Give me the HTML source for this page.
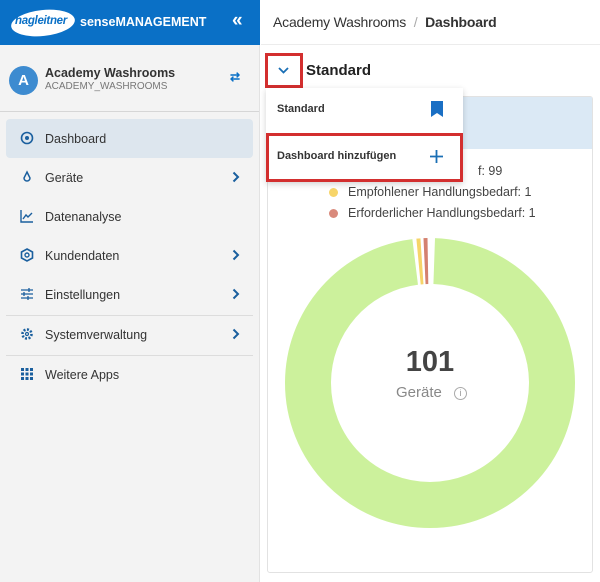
<!DOCTYPE html>
<html><head><meta charset="utf-8"><style>
*{box-sizing:border-box;margin:0;padding:0}
body{width:600px;height:582px;overflow:hidden;font-family:"Liberation Sans",Arial,sans-serif;background:#fff;position:relative}
.abs{position:absolute}
#side{left:0;top:0;width:260px;height:582px;background:#f3f3f3;border-right:1px solid #e2e2e2}
#hdr{left:0;top:0;width:260px;height:45px;background:#0a70c6}
.nav{position:absolute;left:6px;width:247px;height:39px;font-size:12.5px;color:#333;display:flex;align-items:center}
.nav .ic{position:absolute;left:14px;top:12px;width:14px;height:14px}
.nav .t{position:absolute;left:39px}
.nav .ch{position:absolute;left:226px;top:13px}
.sep{position:absolute;left:6px;width:247px;height:1px;background:#dcdcdc}
</style></head><body>
<div id="side" class="abs"></div>
<div id="hdr" class="abs">
 <div class="abs" style="left:11px;top:10px;width:64px;height:26px;background:#fff;border-radius:50%;transform:rotate(-6deg)"></div>
 <div class="abs" style="left:15px;top:15px;font-size:11.5px;font-style:italic;font-weight:bold;color:#0a70c6;letter-spacing:-0.3px">hagleitner</div>
 <div class="abs" style="left:80px;top:15px;font-size:12.5px;font-weight:bold;color:#fff">senseMANAGEMENT</div>
 <div class="abs" style="left:232px;top:10px;font-size:19px;font-weight:bold;color:#fff">«</div>
</div>
<div class="abs" style="left:9px;top:66px;width:29px;height:29px;border-radius:50%;background:#3d8bd0;color:#fff;font-weight:bold;font-size:15px;text-align:center;line-height:29px">A</div>
<div class="abs" style="left:45px;top:66px;font-size:12.5px;font-weight:bold;color:#333">Academy Washrooms</div>
<div class="abs" style="left:45px;top:81px;font-size:10px;color:#777">ACADEMY_WASHROOMS</div>
<div class="abs" style="left:230px;top:70px;font-size:12px;color:#0a70c6;font-weight:bold">⇄</div>
<div class="abs" style="left:0;top:111px;width:259px;height:1px;background:#d6d6d6"></div>
<div class="nav" style="top:119px;background:#dde6ee;border-radius:4px"><svg class="ic" viewBox="0 0 14 14"><circle cx="7" cy="7" r="5.5" fill="none" stroke="#1a5f9e" stroke-width="1.6"/><circle cx="7" cy="7" r="2" fill="#1a5f9e"/></svg><span class="t">Dashboard</span></div>
<div class="nav" style="top:158px"><svg class="ic" viewBox="0 0 14 14"><path d="M7 2 L10 8 A3 3 0 1 1 4 8 Z" fill="none" stroke="#1a5f9e" stroke-width="1.5"/></svg><span class="t">Geräte</span><svg class="ch" width="8" height="12" viewBox="0 0 8 12"><path d="M1.5 1.5 L6 6 L1.5 10.5" fill="none" stroke="#1a5f9e" stroke-width="2"/></svg></div>
<div class="nav" style="top:197px"><svg class="ic" viewBox="0 0 14 14"><path d="M1 1V13H13M3 10L6 6L8 8L12 4" fill="none" stroke="#1a5f9e" stroke-width="1.4"/></svg><span class="t">Datenanalyse</span></div>
<div class="nav" style="top:236px"><svg class="ic" viewBox="0 0 14 14"><path d="M7 1L12.5 4V10L7 13L1.5 10V4Z" fill="none" stroke="#1a5f9e" stroke-width="1.6"/><circle cx="7" cy="7" r="2" fill="none" stroke="#1a5f9e" stroke-width="1.4"/></svg><span class="t">Kundendaten</span><svg class="ch" width="8" height="12" viewBox="0 0 8 12"><path d="M1.5 1.5 L6 6 L1.5 10.5" fill="none" stroke="#1a5f9e" stroke-width="2"/></svg></div>
<div class="nav" style="top:275px"><svg class="ic" viewBox="0 0 14 14"><path d="M1 3H13M1 7H13M1 11H13M9 1V5M4 5V9M8 9V13" fill="none" stroke="#1a5f9e" stroke-width="1.3"/></svg><span class="t">Einstellungen</span><svg class="ch" width="8" height="12" viewBox="0 0 8 12"><path d="M1.5 1.5 L6 6 L1.5 10.5" fill="none" stroke="#1a5f9e" stroke-width="2"/></svg></div>
<div class="sep" style="top:315px"></div>
<div class="nav" style="top:315px"><svg class="ic" viewBox="0 0 14 14"><circle cx="7" cy="7" r="4.5" fill="none" stroke="#1a5f9e" stroke-width="2.6" stroke-dasharray="2 1.5"/><circle cx="7" cy="7" r="1.5" fill="none" stroke="#1a5f9e" stroke-width="1.2"/></svg><span class="t">Systemverwaltung</span><svg class="ch" width="8" height="12" viewBox="0 0 8 12"><path d="M1.5 1.5 L6 6 L1.5 10.5" fill="none" stroke="#1a5f9e" stroke-width="2"/></svg></div>
<div class="sep" style="top:355px"></div>
<div class="nav" style="top:355px"><svg class="ic" viewBox="0 0 14 14" fill="#1a5f9e"><rect x="1" y="1" width="3" height="3"/><rect x="5.5" y="1" width="3" height="3"/><rect x="10" y="1" width="3" height="3"/><rect x="1" y="5.5" width="3" height="3"/><rect x="5.5" y="5.5" width="3" height="3"/><rect x="10" y="5.5" width="3" height="3"/><rect x="1" y="10" width="3" height="3"/><rect x="5.5" y="10" width="3" height="3"/><rect x="10" y="10" width="3" height="3"/></svg><span class="t">Weitere Apps</span></div>

<div class="abs" style="left:261px;top:44px;width:339px;height:1px;background:#ececec"></div>
<div class="abs" style="left:273px;top:14px;font-size:14px;color:#333;letter-spacing:-0.2px">Academy Washrooms <span style="color:#aaa;margin:0 4px">/</span> <b>Dashboard</b></div>

<div class="abs" style="left:267px;top:96px;width:326px;height:477px;border:1px solid #e2e2e2;border-radius:3px;background:#fff"></div>
<div class="abs" style="left:268px;top:97px;width:324px;height:52px;background:#dbe9f5"></div>
<div class="abs" style="left:478px;top:164px;font-size:12.5px;color:#444">f: 99</div>
<div class="abs" style="left:329px;top:188px;width:9px;height:9px;border-radius:50%;background:#f7d56a"></div>
<div class="abs" style="left:348px;top:185px;font-size:12.5px;color:#444">Empfohlener Handlungsbedarf: 1</div>
<div class="abs" style="left:329px;top:209px;width:9px;height:9px;border-radius:50%;background:#d98a7c"></div>
<div class="abs" style="left:348px;top:206px;font-size:12.5px;color:#444">Erforderlicher Handlungsbedarf: 1</div>
<svg class="abs" style="left:285px;top:238px" width="290" height="290" viewBox="0 0 290 290">
 <g transform="rotate(-90 145 145)">
 <circle cx="145" cy="145" r="122" fill="none" stroke="#ccf19c" stroke-width="46" pathLength="360" stroke-dasharray="351 9" stroke-dashoffset="-2"/>
 <circle cx="145" cy="145" r="122" fill="none" stroke="#f6d469" stroke-width="46" pathLength="360" stroke-dasharray="1.6 358.4" stroke-dashoffset="-354.6"/>
 <circle cx="145" cy="145" r="122" fill="none" stroke="#d4816f" stroke-width="46" pathLength="360" stroke-dasharray="1.6 358.4" stroke-dashoffset="-357.4"/>
 </g>
</svg>
<div class="abs" style="left:380px;top:346px;width:100px;text-align:center;font-size:29px;font-weight:bold;color:#444">101</div>
<div class="abs" style="left:396px;top:384px;font-size:15px;color:#888">Geräte</div>
<div class="abs" style="left:454px;top:387px;width:13px;height:13px;border:1px solid #aaa;border-radius:50%;font-size:9px;color:#999;text-align:center;line-height:11px">i</div>

<div class="abs" style="left:265px;top:53px;width:38px;height:35px;border:3px solid #d32f2f"></div>
<svg class="abs" style="left:278px;top:67px" width="11" height="7" viewBox="0 0 11 7"><path d="M1 1L5.5 5.5L10 1" fill="none" stroke="#1a6fb5" stroke-width="1.8"/></svg>
<div class="abs" style="left:306px;top:62px;font-size:15px;font-weight:bold;color:#222">Standard</div>

<div class="abs" style="left:266px;top:88px;width:197px;height:94px;background:#fff;box-shadow:0 2px 6px rgba(0,0,0,.18)"></div>
<div class="abs" style="left:277px;top:103px;font-size:11px;font-weight:bold;color:#333">Standard</div>
<svg class="abs" style="left:431px;top:101px" width="12" height="16" viewBox="0 0 12 16"><path d="M0 0H12V16L6 12L0 16Z" fill="#1a6fc4"/></svg>
<div class="abs" style="left:266px;top:133px;width:197px;height:49px;border:3px solid #d32f2f"></div>
<div class="abs" style="left:277px;top:150px;font-size:11px;font-weight:bold;color:#333">Dashboard hinzufügen</div>
<svg class="abs" style="left:430px;top:150px" width="13" height="13" viewBox="0 0 13 13"><path d="M6.5 0V13M0 6.5H13" stroke="#1a6fb5" stroke-width="1.8"/></svg>
</body></html>
